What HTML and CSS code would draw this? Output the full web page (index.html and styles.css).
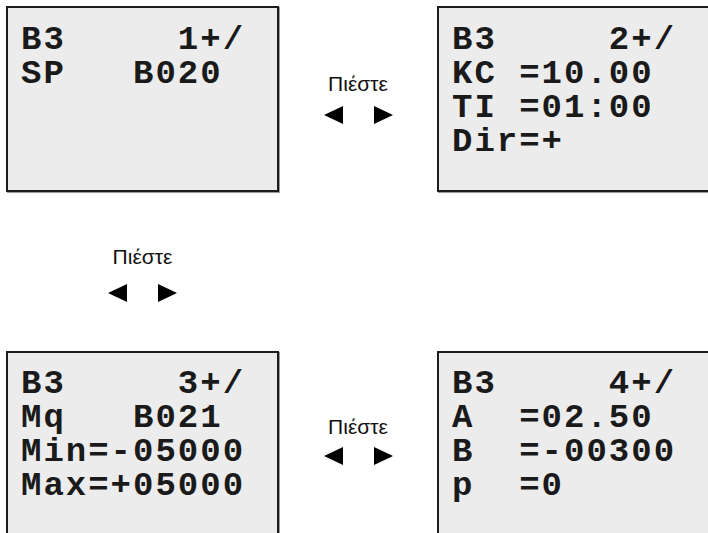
FILE: index.html
```html
<!DOCTYPE html>
<html lang="el">
<head>
    <meta charset="UTF-8">
    <meta name="viewport" content="width=device-width, initial-scale=1.0">
    <title>B3 - Παράμετροι</title>
    <link rel="stylesheet" href="styles.css">
</head>
<body>
    <div class="row row-top">
        <div class="screen">
            <div class="line">B3     1+/</div>
            <div class="line">SP   B020</div>
        </div>
        <div class="press">
            <span class="press-label">Πιέστε</span>
            <span class="arrows">
                <svg width="19" height="18" viewBox="0 0 19 18"><polygon points="0,9 19,0 19,18" /></svg>
                <svg width="19" height="18" viewBox="0 0 19 18"><polygon points="19,9 0,0 0,18" /></svg>
            </span>
        </div>
        <div class="screen screen-right">
            <div class="line">B3     2+/</div>
            <div class="line">KC =10.00</div>
            <div class="line">TI =01:00</div>
            <div class="line">Dir=+</div>
        </div>
    </div>

    <div class="press press-down">
        <span class="press-label">Πιέστε</span>
        <span class="arrows">
            <svg width="19" height="18" viewBox="0 0 19 18"><polygon points="0,9 19,0 19,18" /></svg>
            <svg width="19" height="18" viewBox="0 0 19 18"><polygon points="19,9 0,0 0,18" /></svg>
        </span>
    </div>

    <div class="row row-bottom">
        <div class="screen">
            <div class="line">B3     3+/</div>
            <div class="line">Mq   B021</div>
            <div class="line">Min=-05000</div>
            <div class="line">Max=+05000</div>
        </div>
        <div class="press">
            <span class="press-label">Πιέστε</span>
            <span class="arrows">
                <svg width="19" height="18" viewBox="0 0 19 18"><polygon points="0,9 19,0 19,18" /></svg>
                <svg width="19" height="18" viewBox="0 0 19 18"><polygon points="19,9 0,0 0,18" /></svg>
            </span>
        </div>
        <div class="screen screen-right">
            <div class="line">B3     4+/</div>
            <div class="line">A  =02.50</div>
            <div class="line">B  =-00300</div>
            <div class="line">p  =0</div>
        </div>
    </div>
</body>
</html>
```

FILE: styles.css
```css
html, body {
    margin: 0;
    padding: 0;
    background-color: #fff;
    overflow: hidden;
}

body {
    width: 708px;
    height: 533px;
    font-family: "Liberation Sans", Arial, sans-serif;
    color: #111;
}

.row {
    display: flex;
    align-items: flex-start;
    padding-left: 6px;
}

.row-top {
    padding-top: 6px;
}

.row-bottom {
    margin-top: 49px;
}

.screen {
    flex: none;
    width: 273px;
    height: 186px;
    box-sizing: border-box;
    padding: 15px 0 0 13px;
    background-color: #ececec;
    border: 2px solid #1c1c1c;
    box-shadow: 1px 1px 0 #9a9a9a;
    font-family: "Liberation Mono", "Courier New", monospace;
    font-weight: bold;
    font-size: 34px;
    letter-spacing: 2px;
    line-height: 34px;
    color: #1a1a1a;
}

.row-bottom .screen {
    height: 200px;
    padding-top: 14px;
}

.screen-right {
    width: 290px;
}

.line {
    white-space: pre;
}

.press {
    flex: none;
    width: 158px;
    display: flex;
    flex-direction: column;
    align-items: center;
    padding-top: 66px;
}

.press-label {
    font-size: 21px;
    line-height: 24px;
}

.arrows {
    display: flex;
    gap: 31px;
    margin-top: 10px;
}

.arrows svg {
    display: block;
    fill: #000;
}

.row-bottom .press {
    padding-top: 64px;
}

.row-bottom .arrows {
    margin-top: 8px;
}

.press-down {
    width: 285px;
    padding-top: 53px;
}

.press-down .arrows {
    margin-top: 15px;
}
```
